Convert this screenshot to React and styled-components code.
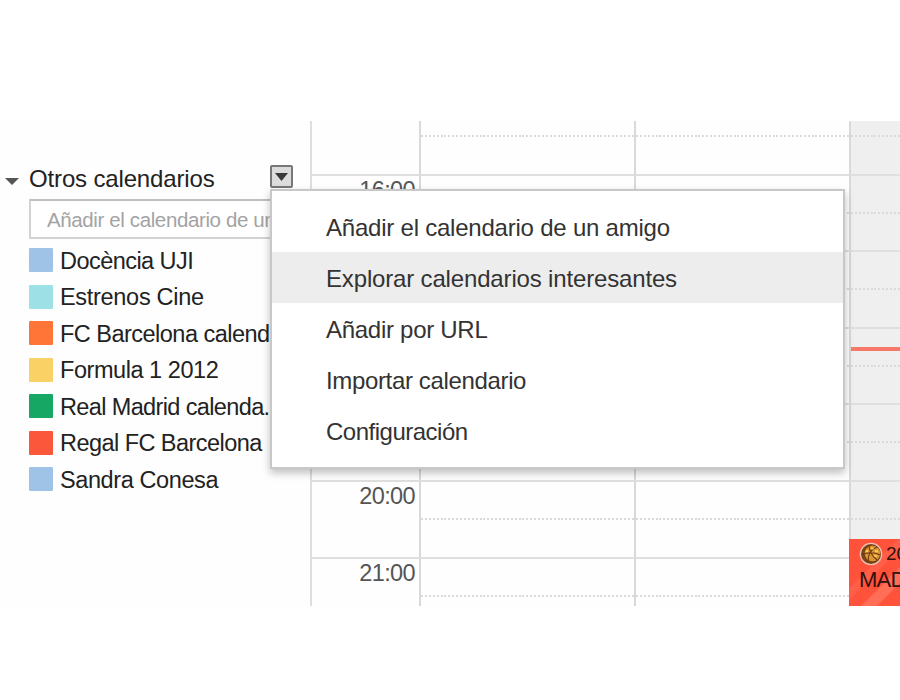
import React from "react";
import styled, { createGlobalStyle } from "styled-components";

const GlobalStyle = createGlobalStyle`
  * { box-sizing: border-box; }
  body {
    margin: 0;
    background: #fff;
    font-family: "Liberation Sans", Arial, sans-serif;
    color: #222;
  }
`;

const Page = styled.main`
  width: 900px;
  height: 700px;
  padding-top: 121px;
  overflow: hidden;
`;

const Stage = styled.div`
  position: relative;
  display: flex;
  height: 485px;
  overflow: hidden;
  background: #fefefe;
`;

const Sidebar = styled.aside`
  flex: 0 0 310px;
  padding-top: 42px;
`;

const SectionHeader = styled.header`
  display: flex;
  align-items: center;
  height: 30px;
  padding: 0 17px 0 5px;
`;

const Collapse = styled.svg`
  width: 14px;
  height: 7px;
  margin: 6px 10px 0 0;
`;

const Title = styled.h2`
  flex: 1;
  margin: 1px 0 0;
  font-size: 24px;
  font-weight: 400;
  line-height: 30px;
  letter-spacing: -0.15px;
`;

const DropButton = styled.button`
  display: flex;
  align-items: center;
  justify-content: center;
  width: 23px;
  height: 23px;
  margin-top: -3px;
  padding: 0;
  border: 2px solid #777;
  border-radius: 2px;
  background: #dcdcdc;
`;

const AddField = styled.div`
  width: 262px;
  height: 40px;
  margin: 6px 0 3px 29px;
  padding-left: 16px;
  border: 2px solid #d3d3d3;
  border-top-color: #c0c0c0;
  background: #fff;
  color: #a3a3a3;
  font-size: 20.5px;
  line-height: 38px;
  letter-spacing: ${(p) => p.$track || 0}px;
  white-space: nowrap;
  overflow: hidden;
`;

const CalendarList = styled.ul`
  margin: 0;
  padding: 0 0 0 29px;
  list-style: none;
`;

const CalendarItem = styled.li`
  display: flex;
  align-items: center;
  height: 36.5px;
  font-size: 23.5px;
  white-space: nowrap;
  letter-spacing: ${(p) => p.$track}px;
`;

const Swatch = styled.span`
  width: 24px;
  height: 24px;
  margin-right: 7px;
  border-radius: 1px;
  background: ${(p) => p.$color};
`;

const Name = styled.span`
  padding-top: 2px;
`;

const Schedule = styled.section`
  position: relative;
  flex: 1;
  border-left: 2px solid #dedede;
`;

const Hours = styled.div`
  margin-top: -22px;
`;

const HourRow = styled.div`
  display: grid;
  grid-template-columns: 109px 215px 215px 60px;
  height: 76.6px;
`;

const TimeCell = styled.div`
  padding: 1px 4px 0 0;
  border-right: 2px solid #d9d9d9;
  border-bottom: 2px solid #dfdfdf;
  color: #555;
  font-size: 23.5px;
  line-height: 27px;
  text-align: right;
  letter-spacing: -0.6px;
`;

const DayCell = styled.div`
  border-right: 2px solid #d9d9d9;
  border-bottom: 2px solid #dfdfdf;
  background: ${(p) => (p.$today ? "#efefef" : "transparent")};
`;

const HalfHour = styled.div`
  height: 38px;
  background: repeating-linear-gradient(90deg, #dadada 0 2px, transparent 2px 3.9px)
    bottom / 100% 2px no-repeat;
`;

const NowLine = styled.div`
  position: absolute;
  left: 539px;
  right: 0;
  top: 226px;
  height: 4px;
  background: #f8796a;
`;

const Event = styled.article`
  position: absolute;
  left: 537px;
  top: 418px;
  width: 90px;
  height: 90px;
  padding: 3px 0 0 10px;
  background: linear-gradient(
    135deg,
    #ff523b 34px, #ff5f48 36px 42px, #ff523b 44px 55px,
    #ff6f58 57px 66px, #ff523b 68px
  );
  color: #32100b;
  white-space: nowrap;
`;

const EventTime = styled.div`
  display: flex;
  align-items: center;
  gap: 3px;
  height: 24px;
  font-size: 19px;
`;

const EventTitle = styled.div`
  font-size: 22px;
  line-height: 27px;
  letter-spacing: -0.8px;
`;

const Menu = styled.ul`
  position: absolute;
  left: 270px;
  top: 68px;
  width: 575px;
  height: 280px;
  margin: 0;
  padding: 10px 0;
  border: 2px solid #c8c8c8;
  background: #fff;
  box-shadow: 0 4px 8px rgba(0, 0, 0, 0.25);
  list-style: none;
`;

const MenuItem = styled.li`
  height: 51px;
  padding-left: 54px;
  background: ${(p) => (p.$active ? "#ededed" : "transparent")};
  color: #333;
  font-size: 24px;
  line-height: 53px;
  letter-spacing: ${(p) => p.$track}px;
`;

const calendars = [
  { name: "Docència UJI", color: "#9fc3e7", track: -0.55 },
  { name: "Estrenos Cine", color: "#9de0e6", track: -0.3 },
  { name: "FC Barcelona calend", color: "#ff7537", track: -0.52 },
  { name: "Formula 1 2012", color: "#fad165", track: -0.45 },
  { name: "Real Madrid calenda.", color: "#16a765", track: -0.63 },
  { name: "Regal FC Barcelona", color: "#fb573b", track: -0.55 },
  { name: "Sandra Conesa", color: "#9fc3e7", track: -0.4 },
];

const menuItems = [
  { label: "Añadir el calendario de un amigo", track: -0.22 },
  { label: "Explorar calendarios interesantes", active: true, track: -0.16 },
  { label: "Añadir por URL", track: -0.28 },
  { label: "Importar calendario", track: -0.35 },
  { label: "Configuración", track: -0.5 },
];

const hours = ["", "16:00", "", "", "", "20:00", "21:00"];

function Basketball() {
  return (
    <svg width="24" height="24" viewBox="0 0 24 24">
      <circle cx="12" cy="12" r="11.3" fill="#efc3b4" />
      <circle cx="12" cy="12" r="10" fill="#7c4317" />
      <circle cx="13.5" cy="11.500" r="7.8" fill="#dc9630" />
      <path
        d="M3 13c6-3 12-3 18 0M10 3c0 6 3 11 8 15M18 5c-6 2-9 7-9 15"
        fill="none" stroke="#6b3812" strokeWidth="1.1"
      />
      <path d="M12 6l2.500 1M16 9l3 .5M15 13.500l3 .8M7 9l2 0" stroke="#f9cf5e" strokeWidth="1.800" />
    </svg>
  );
}

export default function App() {
  return (
    <>
      <GlobalStyle />
      <Page>
        <Stage>
          <Sidebar>
            <SectionHeader>
              <Collapse viewBox="0 0 14 7"><path d="M0 0h14L7 7z" fill="#555" /></Collapse>
              <Title>Otros calendarios</Title>
              <DropButton aria-label="Opciones">
                <svg width="13" height="8" viewBox="0 0 13 8"><path d="M0 0h13L6.500 8z" fill="#3a3a3a" /></svg>
              </DropButton>
            </SectionHeader>
            <AddField $track={-0.38}>Añadir el calendario de un amigo</AddField>
            <CalendarList>
              {calendars.map((c) => (
                <CalendarItem key={c.name} $track={c.track}>
                  <Swatch $color={c.color} />
                  <Name>{c.name}</Name>
                </CalendarItem>
              ))}
            </CalendarList>
          </Sidebar>
          <Schedule>
            <Hours>
              {hours.map((h, i) => (
                <HourRow key={i}>
                  <TimeCell>{h}</TimeCell>
                  <DayCell><HalfHour /></DayCell>
                  <DayCell><HalfHour /></DayCell>
                  <DayCell $today><HalfHour /></DayCell>
                </HourRow>
              ))}
            </Hours>
            <NowLine />
            <Event>
              <EventTime><Basketball />20:45</EventTime>
              <EventTitle>MADRID</EventTitle>
            </Event>
          </Schedule>
          <Menu>
            {menuItems.map((m) => (
              <MenuItem key={m.label} $active={m.active} $track={m.track}>{m.label}</MenuItem>
            ))}
          </Menu>
        </Stage>
      </Page>
    </>
  );
}
